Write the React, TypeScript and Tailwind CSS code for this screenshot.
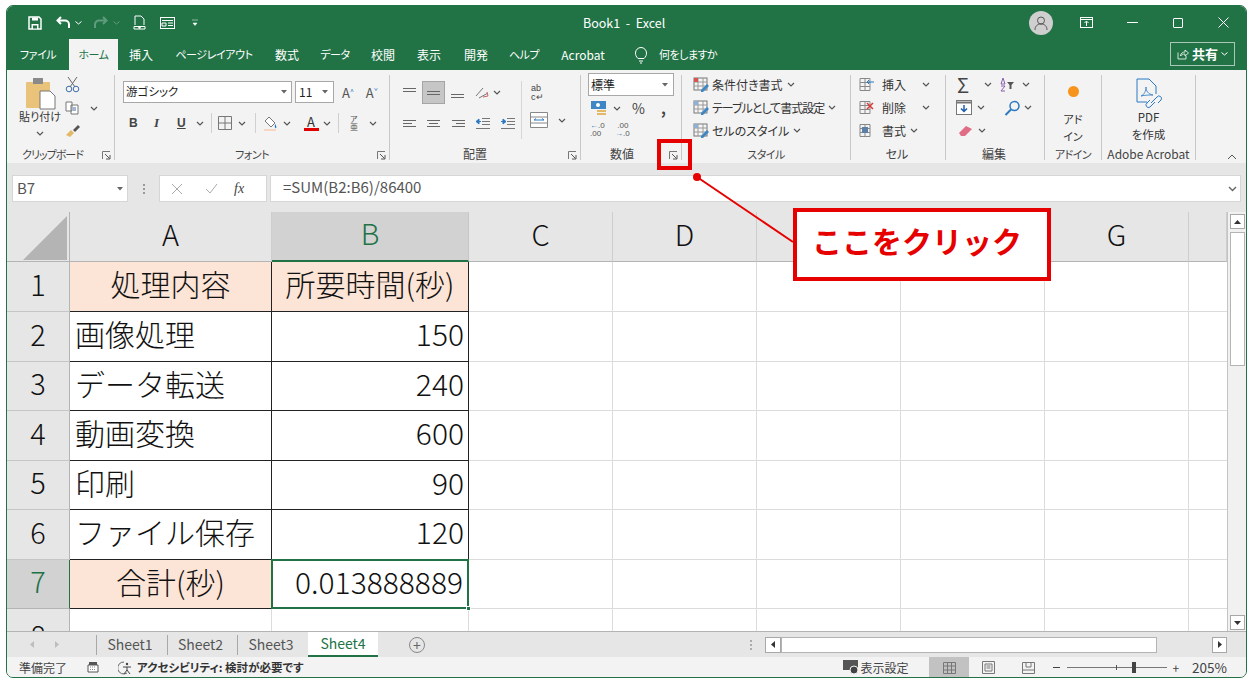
import type { ReactNode } from "react"

function Chev({ className = "" }: { className?: string }) {
  return (
    <svg width="8" height="5" viewBox="0 0 8 5" className={`shrink-0 ${className}`}>
      <path d="M1 1l3 3 3-3" fill="none" stroke="#555" strokeWidth="1.2" />
    </svg>
  )
}

function Launcher({ className = "" }: { className?: string }) {
  return (
    <svg width="9" height="9" viewBox="0 0 9 9" className={`shrink-0 ${className}`}>
      <path d="M.5 8V.5H8" fill="none" stroke="#777" />
      <path d="M3 3l4.500 4.500M8 4v4H4" fill="none" stroke="#555" />
    </svg>
  )
}

function Lines({ aligns, w = 15 }: { aligns: number[][]; w?: number }) {
  return (
    <svg width={w} height="12" viewBox={`0 0 ${w} 12`} className="shrink-0">
      {aligns.map((a, i) => (
        <path key={i} d={`M${a[0]} ${a[2]}.5H${a[1]}`} stroke="#666" />
      ))}
    </svg>
  )
}

function Group({ width, label, labelPad = "", labelSize = "text-[12px]", launcher, children }: { width: string; label: string; labelPad?: string; labelSize?: string; launcher?: boolean; children: ReactNode }) {
  return (
    <div className={`${width} h-[85px] flex flex-col shrink-0 border-r border-[#c8c8c8] relative`}>
      <div className="h-[76px] -mt-[2px] flex flex-col">{children}</div>
      <div className={`h-[10px] leading-[10px] text-center text-[#444] whitespace-nowrap ${labelSize} ${labelPad}`}>{label}</div>
      {launcher && <Launcher className="absolute right-[3px] bottom-0" />}
    </div>
  )
}

function StyleRow({ icon, text, tight }: { icon: ReactNode; text: string; tight?: boolean }) {
  return (
    <div className="h-[23px] flex items-center pl-[11px] text-[12px] text-[#333] whitespace-nowrap">
      <span className="w-[19px] shrink-0">{icon}</span>
      <span className={tight ? "tracking-[-1px]" : ""}>{text}</span>
      <Chev className="ml-[4px]" />
    </div>
  )
}

function TableIcon({ accent }: { accent: string }) {
  return (
    <svg width="16" height="15" viewBox="0 0 16 15">
      <rect x="1" y="1" width="13" height="12" fill="#f5f5f5" stroke="#777" />
      <path d="M1 5h13M1 9h13M5 1v12M10 1v12" stroke="#999" />
      <rect x="1" y="1" width="4" height="4" fill={accent} />
      <path d="M8 13l6-6 2 2-6 6H8z" fill="#3f86c4" />
    </svg>
  )
}

function CellsIcon({ kind }: { kind: "ins" | "del" | "fmt" }) {
  return (
    <svg width="16" height="15" viewBox="0 0 16 15">
      <path d="M2 1.500h10v12H2zM2 5.500h10M2 9.500h10M7 1.500v12" fill="none" stroke="#888" />
      {kind === "ins" && <path d="M9 5h7M9 5l2-2M9 5l2 2" stroke="#2b79c2" fill="none" />}
      {kind === "del" && <path d="M9 3l6 6M15 3l-6 6" stroke="#d83b3b" strokeWidth="1.500" />}
      {kind === "fmt" && <rect x="4" y="4" width="6" height="6" fill="#5b7fa6" />}
    </svg>
  )
}

function Tab({ w, kana, children, active }: { w: string; kana?: boolean; children: ReactNode; active?: boolean }) {
  return (
    <div
      className={`${w} shrink-0 h-full flex items-center justify-center whitespace-nowrap ${
        kana ? "text-[11px] tracking-[-.4px]" : "text-[12px]"
      } ${active ? "bg-[#f3f3f3] text-[#217346]" : "text-white"}`}
    >
      {children}
    </div>
  )
}

const tabs = [
  { t: "ファイル", w: "w-[62px]", kana: true },
  { t: "ホーム", w: "w-[49px]", active: true, kana: true },
  { t: "挿入", w: "w-[46px]" },
  { t: "ページレイアウト", w: "w-[100px]", kana: true },
  { t: "数式", w: "w-[46px]" },
  { t: "データ", w: "w-[50px]", kana: true },
  { t: "校閲", w: "w-[46px]" },
  { t: "表示", w: "w-[46px]" },
  { t: "開発", w: "w-[48px]" },
  { t: "ヘルプ", w: "w-[48px]", kana: true },
  { t: "Acrobat", w: "w-[70px]" },
]

// E and F sit under the callout box in the picture
const cols = ["A", "B", "C", "D", "", "", "G", ""]
const rows = [
  { n: "1", a: "処理内容", b: "所要時間(秒)", head: true },
  { n: "2", a: "画像処理", b: "150" },
  { n: "3", a: "データ転送", b: "240" },
  { n: "4", a: "動画変換", b: "600" },
  { n: "5", a: "印刷", b: "90" },
  { n: "6", a: "ファイル保存", b: "120" },
  { n: "7", a: "合計(秒)", b: "0.013888889", head: true, total: true },
]

function Blank({ last }: { last?: boolean }) {
  return <div className={`border-b border-[#dcdcdc] ${last ? "" : "border-r"}`} />
}

export default function App() {
  return (
    <div className="relative w-[1254px] h-[686px] overflow-hidden bg-white font-['Noto_Sans_CJK_JP','Noto_Sans',sans-serif]">
      <div className="absolute left-[6px] top-[5px] w-[1241px] h-[673px] rounded-[7px] overflow-hidden border border-[#217346] flex flex-col bg-[#e6e6e6]">
        {/* title bar */}
        <div className="h-[33px] shrink-0 bg-[#217346] flex items-center relative text-white">
          <svg width="14" height="14" viewBox="0 0 14 14" className="ml-[21px]">
            <path d="M1 1h10l2 2v10H1z" fill="none" stroke="#fff" strokeWidth="1.500" />
            <path d="M4 1.500h6v3H4zM3.500 8h7v5h-7z" fill="#fff" />
            <path d="M5 9.500h4v3H5z" fill="#217346" />
          </svg>
          <svg width="16" height="14" viewBox="0 0 16 14" className="ml-[14px]">
            <path d="M5 1L1.500 4.500 5 8M2 4.500h7a4 4 0 0 1 4 4V12" fill="none" stroke="#fff" strokeWidth="2" />
          </svg>
          <svg width="7" height="4" viewBox="0 0 7 4" className="ml-[3px]"><path d="M.5.500L3.500 3l3-2.500" fill="none" stroke="#fff" /></svg>
          <svg width="16" height="14" viewBox="0 0 16 14" className="ml-[10px]">
            <path d="M11 1l3.500 3.500L11 8M14 4.500H7a4 4 0 0 0-4 4V12" fill="none" stroke="#5f9c7d" strokeWidth="2" />
          </svg>
          <svg width="7" height="4" viewBox="0 0 7 4" className="ml-[5px]"><path d="M.5.500L3.500 3l3-2.500" fill="none" stroke="#5f9c7d" /></svg>
          <svg width="13" height="15" viewBox="0 0 13 15" className="ml-[13px]">
            <path d="M2 1h6l3 3v6M2 1v9" fill="none" stroke="#fff" />
            <path d="M1 11.500h11v2.500H1z" fill="none" stroke="#fff" />
            <circle cx="6.500" cy="12.500" r="1.200" fill="#fff" />
          </svg>
          <svg width="15" height="12" viewBox="0 0 15 12" className="ml-[14px]">
            <rect x=".5" y=".5" width="14" height="11" fill="none" stroke="#fff" />
            <path d="M2 3.500h11M8 6h5M8 8.500h5M2 6h4v3H2z" fill="none" stroke="#fff" />
          </svg>
          <svg width="6" height="7" viewBox="0 0 6 7" className="ml-[17px]"><path d="M0 1h6M1 4h4l-2 2.500z" fill="#fff" stroke="#fff" strokeWidth=".5" /></svg>
          <div className="absolute left-[576px] top-[8px] text-[12.5px] leading-[17px] whitespace-pre">Book1  -  Excel</div>
          <div className="ml-auto flex items-center">
            <div className="w-[24px] h-[24px] rounded-full bg-[#cfcfcf] flex items-center justify-center">
              <svg width="16" height="16" viewBox="0 0 16 16"><circle cx="8" cy="5.500" r="3.500" fill="none" stroke="#555" /><path d="M2 15c0-4 2.500-6 6-6s6 2 6 6" fill="none" stroke="#555" /></svg>
            </div>
            <svg width="13" height="11" viewBox="0 0 13 11" className="ml-[27px]">
              <rect x=".5" y=".5" width="12" height="10" fill="none" stroke="#fff" />
              <path d="M1 2.500h11M6.500 9V4.500M4.500 6l2-2 2 2" fill="none" stroke="#fff" />
            </svg>
            <div className="w-[11px] h-px bg-white ml-[34px]" />
            <div className="w-[10px] h-[10px] border border-white rounded-[1px] ml-[35px]" />
            <svg width="11" height="11" viewBox="0 0 11 11" className="ml-[35px] mr-[17px]"><path d="M.5.500l10 10M10.500.500l-10 10" stroke="#fff" /></svg>
          </div>
        </div>

        {/* tabs */}
        <div className="h-[31px] shrink-0 bg-[#217346] flex items-center relative [font-feature-settings:'palt']">
          {tabs.map(t => (
            <Tab key={t.t} w={t.w} active={t.active} kana={t.kana}>{t.t}</Tab>
          ))}
          <svg width="14" height="18" viewBox="0 0 14 18" className="ml-[16px]">
            <path d="M4 12.500C2 10.500 1.500 9 1.500 7a5.500 5.500 0 0 1 11 0c0 2-.5 3.500-2.500 5.500zM5 15h4M6 17h2" fill="none" stroke="#fff" />
          </svg>
          <span className="ml-[11px] text-[11px] tracking-[-.5px] text-white whitespace-nowrap">何をしますか</span>
          <div className="ml-auto mr-[11px] w-[65px] h-[24px] mb-[1px] border border-[#a8c7b6] flex items-center justify-center gap-[3px] text-white">
            <svg width="12" height="11" viewBox="0 0 12 11"><path d="M1 3.500V10h8V7M3.500 7c0-2.500 2-4 4.500-4V1l3.500 3L8 7V5C6 5 4.500 5.500 3.500 7z" fill="none" stroke="#fff" strokeWidth=".8" /></svg>
            <span className="text-[13px] font-bold">共有</span>
            <svg width="7" height="4" viewBox="0 0 7 4"><path d="M.5.500L3.500 3l3-2.500" fill="none" stroke="#fff" /></svg>
          </div>
        </div>

        {/* ribbon */}
        <div className="h-[93px] shrink-0 bg-[#f3f3f3] flex pt-[5px] relative [font-feature-settings:'palt']">
          <Group width="w-[108px]" label="クリップボード" labelPad="pr-[16px]" labelSize="text-[11px] tracking-[-1px]" launcher>
            <div className="flex h-[76px]">
              <div className="w-[58px] flex flex-col items-center pl-[8px] shrink-0">
                <svg width="31" height="33" viewBox="0 0 31 33" className="mt-[4px]">
                  <rect x="1" y="5" width="24" height="26" rx="1" fill="#e9c37a" />
                  <rect x="8" y="1" width="10" height="6" fill="#8a8a8a" />
                  <path d="M15 14h10l5 5v13H15z" fill="#fff" stroke="#777" />
                </svg>
                <span className="text-[11px] leading-[13px] whitespace-nowrap text-[#333]">貼り付け</span>
                <Chev className="mt-[8px]" />
              </div>
              <div className="flex-1 flex flex-col items-start pt-[3px]">
                <svg width="15" height="17" viewBox="0 0 15 17">
                  <path d="M3 1l7 10M12 1L5 11" stroke="#666" fill="none" />
                  <circle cx="4" cy="13" r="2.800" fill="none" stroke="#3f6fa8" />
                  <circle cx="11" cy="13" r="2.800" fill="none" stroke="#3f6fa8" />
                </svg>
                <div className="flex items-center mt-[8px] gap-[11px]">
                  <svg width="14" height="14" viewBox="0 0 14 14">
                    <path d="M1 1h6v9H1zM6 4h7v9H6z" fill="#fff" stroke="#777" />
                    <path d="M8 7h3M8 9h3" stroke="#3f6fa8" />
                  </svg>
                  <Chev />
                </div>
                <svg width="16" height="13" viewBox="0 0 16 13" className="mt-[9px]">
                  <path d="M1 11l5-5 3 3-4 4z" fill="#e3b868" />
                  <path d="M8 6l5-5 2 2-5 5z" fill="#555" />
                </svg>
              </div>
            </div>
          </Group>

          <Group width="w-[275px]" label="フォント" labelSize="text-[11px] tracking-[-.5px]" launcher>
            <div className="flex items-center h-[22px] mt-[8px] pl-[8px]">
              <div className="w-[169px] h-[22px] bg-white border border-[#a8a8a8] flex items-center pl-[2px] text-[11.500px] text-[#222]">
                <span>游ゴシック</span>
                <svg width="6" height="4" viewBox="0 0 6 4" className="ml-auto mr-[4px]"><path d="M0 0h6L3 3.500z" fill="#666" /></svg>
              </div>
              <div className="w-[39px] h-[22px] ml-[3px] bg-white border border-[#a8a8a8] flex items-center pl-[3px] text-[12px] text-[#222]">
                <span>11</span>
                <svg width="6" height="4" viewBox="0 0 6 4" className="ml-auto mr-[5px]"><path d="M0 0h6L3 3.500z" fill="#666" /></svg>
              </div>
              <span className="ml-[8px] text-[13px] text-[#555] leading-none">A<sup className="text-[7px] text-[#2b79c2]">^</sup></span>
              <span className="ml-[12px] text-[13px] text-[#555] leading-none">A<sup className="text-[7px] text-[#2b79c2]">ˇ</sup></span>
            </div>
            <div className="flex items-center h-[22px] mt-[9px] pl-[14px] text-[#444]">
              <span className="w-[9px] text-[12px] font-bold font-['Liberation_Sans']">B</span>
              <span className="w-[8px] ml-[16px] text-[13px] italic font-bold font-['Liberation_Serif']">I</span>
              <span className="w-[10px] ml-[15px] text-[12px] font-bold underline font-['Liberation_Sans']">U</span>
              <Chev className="ml-[9px]" />
              <div className="w-px h-[20px] bg-[#d0d0d0] ml-[7px]" />
              <svg width="14" height="14" viewBox="0 0 14 14" className="ml-[6px]"><path d="M.5.500h13v13H.5zM7 .500v13M.5 7h13" fill="none" stroke="#777" /></svg>
              <Chev className="ml-[6px]" />
              <div className="w-px h-[20px] bg-[#d0d0d0] ml-[9px]" />
              <svg width="15" height="15" viewBox="0 0 15 15" className="ml-[7px]">
                <path d="M6 1l6 6-4 4-6-6z" fill="#fff" stroke="#777" />
                <path d="M12 8c1 1.500 2 3 1 4s-1.500-2-1-4z" fill="#2b79c2" />
                <rect x="1" y="13" width="12" height="2" fill="#f7d7c4" />
              </svg>
              <Chev className="ml-[5px]" />
              <div className="w-[16px] ml-[12px] flex flex-col items-center text-[13px] leading-[13px] text-[#333]">
                <span>A</span>
                <span className="w-[15px] h-[3px] bg-[#e00000]" />
              </div>
              <Chev className="ml-[4px]" />
              <div className="w-px h-[20px] bg-[#d0d0d0] ml-[7px]" />
              <span className="ml-[11px] w-[9px] text-[8px] leading-[8px] text-[#555]">ア亜</span>
              <Chev className="ml-[10px]" />
            </div>
          </Group>

          <Group width="w-[191px]" label="配置" labelPad="pr-[20px]" launcher>
            <div className="flex h-[70px]">
              <div className="w-[132px] border-r border-[#d6d6d6] h-[58px] mt-[8px] pl-[12px] shrink-0">
                <div className="flex items-center h-[23px]">
                  <Lines aligns={[[1, 14, 1], [1, 14, 4]]} />
                  <div className="w-[23px] h-[23px] bg-[#c6c6c6] border border-[#a5a5a5] flex items-center justify-center ml-[5px]">
                    <Lines aligns={[[1, 14, 4], [1, 14, 7]]} />
                  </div>
                  <span className="ml-[5px]"><Lines aligns={[[1, 14, 7], [1, 14, 10]]} /></span>
                  <svg width="16" height="14" viewBox="0 0 16 14" className="ml-[9px]">
                    <path d="M2 10L9 2M5 12l9-5" stroke="#777" fill="none" />
                    <path d="M9 11l5-1-1-4" stroke="#c66" fill="none" />
                  </svg>
                  <Chev className="ml-[3px]" />
                </div>
                <div className="flex items-center h-[23px] mt-[8px]">
                  <Lines aligns={[[1, 14, 2], [1, 10, 5], [1, 14, 8]]} />
                  <span className="ml-[9px]"><Lines aligns={[[1, 14, 2], [3, 12, 5], [1, 14, 8]]} /></span>
                  <span className="ml-[10px]"><Lines aligns={[[1, 14, 2], [5, 14, 5], [1, 14, 8]]} /></span>
                  <svg width="16" height="13" viewBox="0 0 16 13" className="ml-[9px]">
                    <path d="M7 1.500h8M7 4.500h8M7 7.500h8M1 11.500h14" stroke="#777" />
                    <path d="M1 4.500h5M1 4.500l3-2.500v5z" fill="#2b79c2" stroke="#2b79c2" />
                  </svg>
                  <svg width="16" height="13" viewBox="0 0 16 13" className="ml-[9px]">
                    <path d="M7 1.500h8M7 4.500h8M7 7.500h8M1 11.500h14" stroke="#777" />
                    <path d="M1 4.500h5M6 4.500l-3-2.500v5z" fill="#2b79c2" stroke="#2b79c2" />
                  </svg>
                </div>
              </div>
              <div className="flex-1 pl-[8px] pt-[11px]">
                <div className="text-[9px] leading-[9px] w-[16px] ml-[1px] text-[#444] font-['Liberation_Sans']">ab<br />c↵</div>
                <div className="flex items-center mt-[10px]">
                  <svg width="18" height="16" viewBox="0 0 18 16">
                    <path d="M.5.500h17v15H.5zM.5 5h17M.5 11h17" fill="#fff" stroke="#888" />
                    <path d="M4 8h10M4 8l2-1.500M14 8l-2-1.500" stroke="#2b79c2" fill="none" />
                  </svg>
                  <Chev className="ml-[10px]" />
                </div>
              </div>
            </div>
          </Group>

          <Group width="w-[101px]" label="数値" labelPad="pr-[18px]" launcher>
            <div className="pl-[7px]">
              <div className="w-[86px] h-[23px] bg-white border border-[#a8a8a8] flex items-center pl-[2px] text-[12px] text-[#222]">
                <span>標準</span>
                <svg width="6" height="4" viewBox="0 0 6 4" className="ml-auto mr-[5px]"><path d="M0 0h6L3 3.500z" fill="#666" /></svg>
              </div>
              <div className="flex items-center h-[22px] mt-[1px] pl-[3px]">
                <svg width="16" height="15" viewBox="0 0 16 15">
                  <rect x="0" y="0" width="15" height="8" fill="#3f86c4" />
                  <circle cx="7" cy="4" r="2" fill="#fff" />
                  <rect x="6" y="9" width="9" height="2" fill="#e3b868" />
                  <rect x="6" y="12" width="9" height="2" fill="#e3b868" />
                </svg>
                <Chev className="ml-[6px]" />
                <span className="ml-[11px] text-[14px] text-[#444] leading-none">%</span>
                <span className="ml-[16px] text-[15px] font-bold text-[#444] leading-[14px]">,</span>
              </div>
              <div className="flex items-center h-[22px] pl-[2px] text-[#555]">
                <div className="text-[8px] leading-[8px] w-[16px] font-['Liberation_Sans']"><span className="text-[#2b79c2]">←</span>.0<br />.00</div>
                <div className="text-[8px] leading-[8px] w-[16px] ml-[9px] font-['Liberation_Sans']">&nbsp;.00<br /><span className="text-[#2b79c2]">→</span>.0</div>
              </div>
            </div>
          </Group>

          <Group width="w-[169px]" label="スタイル" labelSize="text-[11px] tracking-[-.5px]">
            <StyleRow icon={<TableIcon accent="#d9534f" />} text="条件付き書式" />
            <StyleRow icon={<TableIcon accent="#8fb0d4" />} text="テーブルとして書式設定" tight />
            <StyleRow icon={<TableIcon accent="#8fb0d4" />} text="セルのスタイル" />
          </Group>

          <Group width="w-[95px]" label="セル" labelPad="pr-[2px]">
            <div className="h-[23px] flex items-center pl-[7px] text-[12px] text-[#333]"><span className="w-[24px]"><CellsIcon kind="ins" /></span><span>挿入</span><Chev className="ml-[16px]" /></div>
            <div className="h-[23px] flex items-center pl-[7px] text-[12px] text-[#333]"><span className="w-[24px]"><CellsIcon kind="del" /></span><span>削除</span><Chev className="ml-[16px]" /></div>
            <div className="h-[23px] flex items-center pl-[7px] text-[12px] text-[#333]"><span className="w-[24px]"><CellsIcon kind="fmt" /></span><span>書式</span><Chev className="ml-[4px]" /></div>
          </Group>

          <Group width="w-[99px]" label="編集" labelPad="pr-[2px]">
            <div className="h-[23px] flex items-center pl-[11px]">
              <span className="w-[15px] text-[20px] leading-none text-[#444]">Σ</span>
              <Chev className="ml-[12px]" />
              <svg width="15" height="14" viewBox="0 0 15 14" className="ml-[8px]">
                <path d="M3 0l-2 6h4zM1 8h4L1 13h4" fill="none" stroke="#8a5fb0" />
                <path d="M7 4h7l-2.500 3v4h-2V7z" fill="#555" />
              </svg>
              <Chev className="ml-[7px]" />
            </div>
            <div className="h-[23px] flex items-center pl-[10px]">
              <svg width="16" height="15" viewBox="0 0 16 15">
                <rect x=".5" y=".5" width="15" height="14" fill="#fff" stroke="#777" />
                <path d="M.5 2.500h15" stroke="#777" strokeWidth="2" />
                <path d="M8 5v6M5 8.500l3 3 3-3" stroke="#1f5fa8" strokeWidth="1.500" fill="none" />
              </svg>
              <Chev className="ml-[5px]" />
              <svg width="17" height="16" viewBox="0 0 17 16" className="ml-[19px]">
                <circle cx="10.500" cy="6" r="4.500" fill="none" stroke="#2b79c2" strokeWidth="1.500" />
                <path d="M7 9.500L1.500 15" stroke="#2b79c2" strokeWidth="2" />
              </svg>
              <Chev className="ml-[3px]" />
            </div>
            <div className="h-[23px] flex items-center pl-[12px]">
              <svg width="15" height="12" viewBox="0 0 15 12"><path d="M1 8l7-7 6 3-7 7H3z" fill="#e06c86" /></svg>
              <Chev className="ml-[5px]" />
            </div>
          </Group>

          <Group width="w-[57px]" label="アドイン" labelSize="text-[11px] tracking-[-.5px]">
            <div className="flex flex-col items-center">
              <div className="w-[11px] h-[11px] rounded-full bg-[#f7941d] mt-[13px]" />
              <div className="text-[11px] leading-[17px] text-center text-[#333] mt-[14px]">アド<br />イン</div>
            </div>
          </Group>

          <Group width="w-[94px]" label="Adobe Acrobat">
            <div className="flex flex-col items-center">
              <svg width="27" height="31" viewBox="0 0 27 31" className="mt-[5px]">
                <path d="M2 1h12l7 7v8M2 1v23h10" fill="none" stroke="#2b79c2" />
                <path d="M6 18c3-1 5-5 5-9 0 4 2 7 7 8-4 0-8 0-12 1z" fill="none" stroke="#2b79c2" strokeWidth=".8" />
                <path d="M16 25l6-6a2.500 2.500 0 0 1 4 3l-3 3M20 24l-5 5a2.500 2.500 0 0 1-3-4l3-3" fill="none" stroke="#2b79c2" />
              </svg>
              <div className="text-[11.500px] leading-[17px] text-center text-[#333]">PDF<br />を作成</div>
            </div>
          </Group>

          <svg width="10" height="6" viewBox="0 0 10 6" className="absolute right-[9px] top-[84px]"><path d="M1 5l4-4 4 4" fill="none" stroke="#555" /></svg>
        </div>

        {/* formula bar */}
        <div className="h-[49px] shrink-0 bg-[#e6e6e6] flex pt-[12px] pb-[10px] pl-[5px] pr-[5px]">
          <div className="w-[116px] bg-white border border-[#d6d6d6] flex items-center pl-[4px] text-[15px] text-[#555]">
            <span>B7</span>
            <svg width="6" height="4" viewBox="0 0 6 4" className="ml-auto mr-[4px]"><path d="M0 0h6L3 3.500z" fill="#666" /></svg>
          </div>
          <div className="w-[31px] flex flex-col items-center justify-center gap-[2px]">
            <span className="w-[2px] h-[2px] bg-[#999]" />
            <span className="w-[2px] h-[2px] bg-[#999]" />
            <span className="w-[2px] h-[2px] bg-[#999]" />
          </div>
          <div className="w-[108px] bg-white border border-[#d6d6d6] flex items-center">
            <svg width="12" height="12" viewBox="0 0 12 12" className="ml-[11px]"><path d="M1 1l10 10M11 1L1 11" stroke="#aaa" /></svg>
            <svg width="13" height="11" viewBox="0 0 13 11" className="ml-[22px]"><path d="M1 6l4 4 7-9" fill="none" stroke="#aaa" /></svg>
            <span className="ml-[16px] text-[14px] italic font-['Liberation_Serif'] text-[#444]">fx</span>
          </div>
          <div className="ml-[3px] flex-1 bg-white border border-[#d6d6d6] flex items-center pl-[12px] text-[15px] text-[#555]">
            <span className="-mt-[2px]">=SUM(B2:B6)/86400</span>
            <svg width="9" height="6" viewBox="0 0 9 6" className="ml-auto mr-[3px]"><path d="M1 1l3.500 3.500L8 1" fill="none" stroke="#666" strokeWidth="1.400" /></svg>
          </div>
        </div>

        {/* sheet */}
        <div className="h-[419px] shrink-0 flex bg-white">
          <div className="w-[1220px] shrink-0 grid grid-cols-[63px_202px_197px_144px_144px_144px_144px_144px_38px] grid-rows-[50px_50px_50px_49px_50px_49px_50px_49px_22px] text-[#111] font-light">
            <div className="bg-[#e6e6e6] border-r border-b border-[#b4b4b4] flex items-end justify-end pr-[2px] pb-[1px]">
              <svg width="44" height="44" viewBox="0 0 44 44"><path d="M44 0v44H0z" fill="#b4b4b4" /></svg>
            </div>
            {cols.map((c, i) => (
              <div
                key={i}
                className={`flex items-center justify-center text-[29px] pb-[6px] border-r ${
                  c === "B"
                    ? "bg-[#d2d2d2] text-[#217346] border-b-2 border-b-[#217346] border-r-[#c6c6c6]"
                    : "bg-[#e6e6e6] border-b border-b-[#b4b4b4] border-r-[#cdcdcd]"
                }`}
              >
                {c}
              </div>
            ))}
            {rows.map(r => [
              <div
                key={r.n}
                className={`flex items-center justify-center text-[29px] pb-[6px] border-b border-r ${
                  r.total ? "bg-[#d2d2d2] text-[#217346] border-b-[#b4b4b4] border-r-[#217346]" : "bg-[#e6e6e6] border-b-[#c6c6c6] border-r-[#b4b4b4]"
                }`}
              >
                {r.n}
              </div>,
              <div
                key={r.n + "a"}
                className={`flex items-center text-[30px] pb-[6px] border-b border-r border-[#222] whitespace-nowrap ${
                  r.head ? "bg-[#fce4d6] justify-center" : "bg-white pl-[5px]"
                }`}
              >
                {r.a}
              </div>,
              <div
                key={r.n + "b"}
                className={`relative flex items-center text-[30px] pb-[6px] border-b border-r border-[#222] whitespace-nowrap ${
                  r.total ? "bg-white justify-end pr-[5px]" : r.head ? "bg-[#fce4d6] justify-center" : "bg-white justify-end pr-[4px]"
                }`}
              >
                {r.b}
                {r.total && (
                  <>
                    <div className="absolute -left-px -top-px -right-px -bottom-px border-2 border-[#217346]" />
                    <div className="absolute -right-[3px] -bottom-[3px] w-[5px] h-[5px] bg-[#217346] border border-white" />
                  </>
                )}
              </div>,
              <Blank key={r.n + "c"} />,
              <Blank key={r.n + "d"} />,
              <Blank key={r.n + "e"} />,
              <Blank key={r.n + "f"} />,
              <Blank key={r.n + "g"} />,
              <Blank key={r.n + "h"} last />,
            ])}
            <div className="bg-[#e6e6e6] border-r border-[#b4b4b4] overflow-hidden flex justify-center text-[29px] leading-[40px] pt-[5px]">8</div>
            <div className="border-r border-[#dcdcdc]" />
            <div className="border-r border-[#dcdcdc]" />
            <div className="border-r border-[#dcdcdc]" />
            <div className="border-r border-[#dcdcdc]" />
            <div className="border-r border-[#dcdcdc]" />
            <div className="border-r border-[#dcdcdc]" />
            <div className="border-r border-[#dcdcdc]" />
            <div />
          </div>
          {/* vertical scrollbar */}
          <div className="flex-1 bg-[#f1f1f1] border-l border-[#c4c4c4] flex flex-col items-center pt-[2px] pb-px">
            <div className="w-[15px] h-[15px] bg-white border border-[#a8a8a8] flex items-center justify-center">
              <svg width="7" height="4" viewBox="0 0 7 4"><path d="M3.500 0L7 4H0z" fill="#333" /></svg>
            </div>
            <div className="w-[15px] h-[134px] mt-[3px] bg-white border border-[#b4b4b4]" />
            <div className="w-[15px] h-[15px] mt-auto bg-white border border-[#a8a8a8] flex items-center justify-center">
              <svg width="7" height="4" viewBox="0 0 7 4"><path d="M0 0h7L3.500 4z" fill="#333" /></svg>
            </div>
          </div>
        </div>

        {/* sheet tabs */}
        <div className="h-[26px] shrink-0 bg-[#e6e6e6] border-t border-[#b4b4b4] flex items-center text-[14px] text-[#555]">
          <svg width="4" height="7" viewBox="0 0 4 7" className="ml-[23px]"><path d="M4 0v7L0 3.500z" fill="#bdbdbd" /></svg>
          <svg width="4" height="7" viewBox="0 0 4 7" className="ml-[21px]"><path d="M0 0v7l4-3.500z" fill="#bdbdbd" /></svg>
          <div className="w-px h-[20px] bg-[#a8a8a8] ml-[37px]" />
          <div className="w-[70px] text-center pr-[4px] pb-[1px]">Sheet1</div>
          <div className="w-px h-[20px] bg-[#a8a8a8]" />
          <div className="w-[69px] text-center pr-[4px] pb-[1px]">Sheet2</div>
          <div className="w-px h-[20px] bg-[#a8a8a8]" />
          <div className="w-[70px] text-center pr-[4px] pb-[1px]">Sheet3</div>
          <div className="w-[70px] h-full bg-white border-b-2 border-[#217346] text-[#217346] text-center leading-[22px]">Sheet4</div>
          <div className="ml-[31px] w-[16px] h-[16px] rounded-full border border-[#888] flex items-center justify-center text-[14px] leading-none text-[#666]">+</div>
          <div className="ml-[325px] flex flex-col gap-[2px]">
            <span className="w-[2px] h-[2px] bg-[#aaa]" />
            <span className="w-[2px] h-[2px] bg-[#aaa]" />
            <span className="w-[2px] h-[2px] bg-[#aaa]" />
          </div>
          <div className="ml-[13px] w-[16px] h-[16px] bg-white border border-[#a8a8a8] flex items-center justify-center">
            <svg width="4" height="7" viewBox="0 0 4 7"><path d="M4 0v7L0 3.500z" fill="#333" /></svg>
          </div>
          <div className="w-[376px] h-[16px] bg-white border border-[#b4b4b4]" />
          <div className="ml-[55px] w-[15px] h-[16px] bg-white border border-[#a8a8a8] flex items-center justify-center">
            <svg width="4" height="7" viewBox="0 0 4 7"><path d="M0 0v7l4-3.500z" fill="#333" /></svg>
          </div>
        </div>

        {/* status bar */}
        <div className="flex-1 bg-[#f3f3f3] flex items-center text-[12px] text-[#444] whitespace-nowrap [font-feature-settings:'palt']">
          <span className="ml-[12px]">準備完了</span>
          <svg width="12" height="11" viewBox="0 0 12 11" className="ml-[20px]"><path d="M1 3h10v7H1z" fill="#fff" stroke="#555" /><path d="M2 0h8v3H2z" fill="#555" /><path d="M3 5h6M3 7.500h6" stroke="#888" strokeDasharray="1 1" /></svg>
          <svg width="14" height="14" viewBox="0 0 14 14" className="ml-[19px]"><path d="M6 1a6 6 0 1 0 3 11" fill="none" stroke="#666" /><circle cx="9" cy="3" r="1.200" fill="#444" /><path d="M5 6h8M9 6v3l-3 4M9 9l3 4" fill="none" stroke="#444" /></svg>
          <span className="ml-[5px] font-bold text-[11.500px] text-[#333]">アクセシビリティ: 検討が必要です</span>
          <svg width="16" height="15" viewBox="0 0 16 15" className="ml-auto"><path d="M0 0h15v10H0z" fill="#555" /><circle cx="11" cy="10" r="4" fill="#444" stroke="#f3f3f3" /></svg>
          <span className="ml-px text-[12px]">表示設定</span>
          <div className="ml-[21px] w-[40px] h-[21px] bg-[#c2c2c2] flex items-center justify-center">
            <svg width="13" height="12" viewBox="0 0 13 12"><path d="M.5.500h12v11H.5zM4.500.500v11M8.500.500v11M.5 4h12M.5 8h12" fill="none" stroke="#777" /></svg>
          </div>
          <svg width="13" height="13" viewBox="0 0 13 13" className="ml-[13px]"><path d="M.5.500h12v12H.5zM3 3h7v7H3zM4.500 5h4M4.500 7h4" fill="none" stroke="#777" /></svg>
          <svg width="13" height="12" viewBox="0 0 13 12" className="ml-[27px]"><path d="M.5.500h12v11H.5zM.5 8h12M4 .500V5h5V.500" fill="none" stroke="#777" /></svg>
          <div className="w-[7px] h-px bg-[#444] ml-[18px]" />
          <div className="relative w-[100px] h-px bg-[#777] ml-[7px]">
            <div className="absolute left-[49px] -top-[2px] w-px h-[5px] bg-[#555]" />
            <div className="absolute left-[65px] -top-[5px] w-[4px] h-[11px] bg-[#444]" />
          </div>
          <span className="ml-[5px] text-[#444]">+</span>
          <span className="ml-[13px] mr-[19px] text-[13.500px]">205%</span>
        </div>
      </div>

      {/* callout overlay */}
      <div className="absolute left-[657px] top-[139px] w-[35px] h-[31px] border-4 border-[#e60000]" />
      <svg width="120" height="90" viewBox="0 0 120 90" className="absolute left-[685px] top-[165px]">
        <circle cx="12" cy="12" r="4" fill="#e60000" />
        <path d="M12 12l96 65" stroke="#e60000" strokeWidth="2" />
      </svg>
      <div className="absolute left-[793px] top-[208px] w-[258px] h-[73px] bg-white border-4 border-[#e60000] flex items-center justify-center pb-[8px] pr-[10px] text-[30px] font-bold text-[#e60000] whitespace-nowrap">
        ここをクリック
      </div>
    </div>
  )
}
